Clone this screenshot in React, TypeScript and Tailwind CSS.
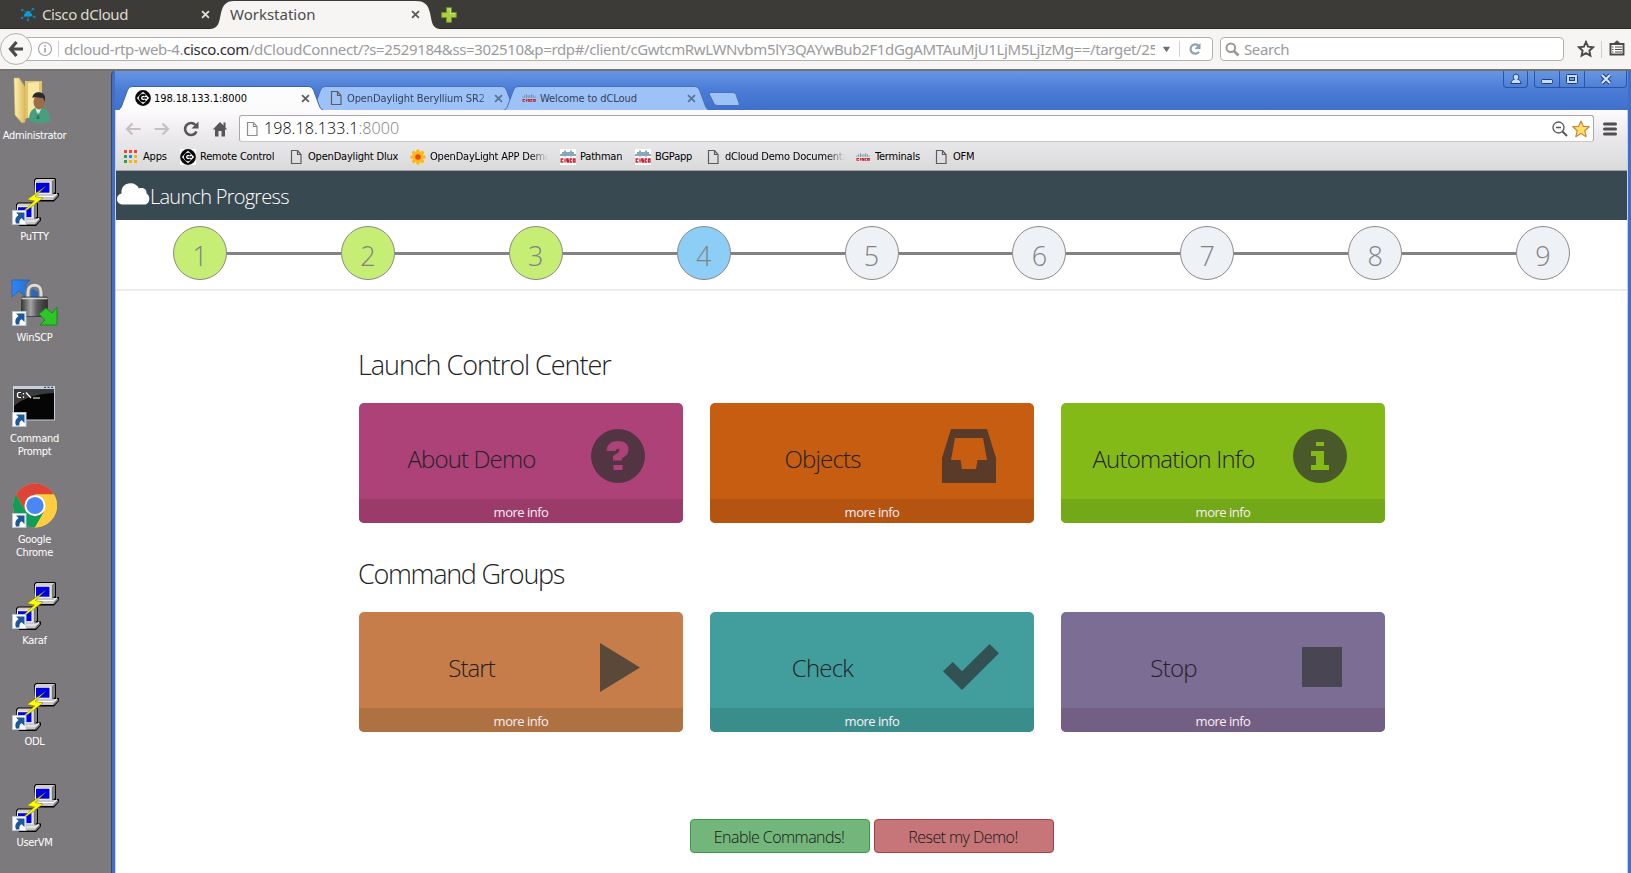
import React from "react";

const tahoma = "font-['DejaVu_Sans_Condensed','DejaVu_Sans',sans-serif]";
const ubuntu = "font-['Noto_Sans',sans-serif]";

/* ---------- Desktop icons ---------- */

function ShortcutBadge() {
  return (
    <g>
      <rect x="1.5" y="32.5" width="13.5" height="14" fill="#fdfdfd" stroke="#b9c4cf" strokeWidth="1" />
      <path d="M5 34.500h8.500v8.500l-2.800-2.800c-2 1-2.500 2.600-2.300 5.300H5c-1.500-3.500-.6-6.200 2.600-8.400z" fill="#1c5799" />
    </g>
  );
}

function Computer() {
  return (
    <g strokeLinejoin="round">
      <path d="M23 2l2-2h19l1 1v14h3v3l-5 5.500H27l-2-1-3-1v-4l2-2z" fill="#000" />
      <path d="M24 16h18.500L47 16l-4.500 6H26l-3-2v-2z" fill="#c6c6c6" />
      <path d="M24 18.500h18.500L46 15.500" fill="none" stroke="#fff" strokeWidth="1" />
      <path d="M42.500 21.500L47 17" stroke="#7c7c7c" strokeWidth="1.500" />
      <path d="M24 2.500L25.500 1H44l-2.500 2V16.500H24z" fill="#d4d0c8" />
      <path d="M41.500 3L44 1v13l-2.500 2.500z" fill="#808080" />
      <rect x="24.300" y="4" width="15.200" height="11.500" fill="#fff" />
      <rect x="25" y="4.700" width="13.500" height="10" fill="#0000e4" />
    </g>
  );
}

function PuttyIcon() {
  return (
    <svg viewBox="0 0 48 48" className="h-12 w-12">
      <Computer />
      <g transform="translate(-18 24.500)"><Computer /></g>
      <path d="M34.500 8.500L16 21.500l7.500 1.500L13 32.500l3-.500L32 20l-8-1.500z" fill="#ff0" stroke="#6b6b00" strokeWidth=".5" />
      <ShortcutBadge />
    </svg>
  );
}

function AdminIcon() {
  return (
    <svg viewBox="0 0 48 48" className="h-12 w-12">
      <defs>
        <linearGradient id="fold" x1="0" x2="1">
          <stop offset="0" stopColor="#fdf3b5" /><stop offset="1" stopColor="#dcb85c" />
        </linearGradient>
      </defs>
      <path d="M14 4l17 0v32l-17 6z" fill="#e3c46e" />
      <path d="M17 6l11-1v31l-11 5z" fill="#f7e7a4" />
      <path d="M3 1l5 0 6 9v35l-3 1L4 38z" fill="url(#fold)" stroke="#d5b65f" strokeWidth=".6" />
      <path d="M18 43c0-9 4-12 9-13 7 0 12 3 12 14-6 3-16 3-21-1z" fill="#479f7d" />
      <path d="M24 30l3 9 4-9z" fill="#d9efe6" />
      <path d="M27 35l-2 7h4z" fill="#2c7d60" />
      <ellipse cx="28" cy="25" rx="5.500" ry="7.500" fill="#9c6d47" />
      <path d="M21.500 21c0-8 12-7 12.500-1v5l-2-4c-4 0-7-1-8-1z" fill="#2c2b2b" />
    </svg>
  );
}

function WinScpIcon() {
  return (
    <svg viewBox="0 0 48 48" className="h-12 w-12">
      <defs>
        <linearGradient id="lockBody" x1="0" x2="1">
          <stop offset="0" stopColor="#3a3a3a" /><stop offset=".35" stopColor="#a5a5a5" />
          <stop offset=".6" stopColor="#5a5a5a" /><stop offset="1" stopColor="#2e2e2e" />
        </linearGradient>
        <linearGradient id="upArrow" x1="0" x2="1">
          <stop offset="0" stopColor="#2f86f5" /><stop offset="1" stopColor="#2a5ea8" />
        </linearGradient>
      </defs>
      <path d="M1 1h18l-5 5 16 9-9 9-13-12-7 6z" fill="url(#upArrow)" stroke="#1c62c8" strokeWidth=".8" />
      <path d="M17 20v-7c0-9 13-9 13 0v7" fill="none" stroke="#777" strokeWidth="6" />
      <path d="M17 20v-7c0-9 13-9 13 0v7" fill="none" stroke="#dcdcdc" strokeWidth="3" />
      <rect x="10.500" y="18" width="26" height="19.500" rx="1" fill="url(#lockBody)" stroke="#333" strokeWidth=".8" />
      <path d="M10.500 19.500h26" stroke="#cfcfcf" strokeWidth="1.500" />
      <path d="M46 28v18H29l5-5-6-6 7-6 6 5z" fill="#2fc52a" stroke="#128c17" strokeWidth="1" />
      <ShortcutBadge />
    </svg>
  );
}

function CmdIcon() {
  return (
    <svg viewBox="0 0 48 48" className="h-12 w-12">
      <rect x="2" y="6" width="42" height="34.500" fill="#c4d0dc" />
      <rect x="3" y="9" width="40" height="30.500" fill="#050505" />
      <path d="M3 9h40v4C25 14 12 18 3 26z" fill="#3b3b3b" />
      <path d="M33 7.300h2m1.500 0h2m1.500 0h2" stroke="#31508a" strokeWidth="1.200" />
      <path d="M10 12.500H7.500l-1 1v3l1 1H10M12.500 13v1.500m0 2v1.500M15 12.500l5 5.500M22 18h7" fill="none" stroke="#fff" strokeWidth="1.200" />
      <ShortcutBadge />
    </svg>
  );
}

function ChromeIcon() {
  return (
    <svg viewBox="0 0 48 48" className="h-12 w-12">
      <g transform="translate(0 -2.500)">
        <circle cx="24" cy="27" r="22" fill="#ffcd40" />
        <path d="M4.950 16A22 22 0 0 1 43.050 16L24 16 14.500 32.500z" fill="#db4437" />
        <path d="M4.950 16A22 22 0 0 0 24 49L33.500 32.500 24 38 14.500 32.500z" fill="#0f9d58" />
        <path d="M24 16h19.050A22 22 0 0 1 24 49l9.500-16.500z" fill="#ffcd40" />
        <circle cx="24" cy="27" r="10.500" fill="#fff" />
        <circle cx="24" cy="27" r="8.600" fill="#4a86f5" />
      </g>
      <ShortcutBadge />
    </svg>
  );
}

const shortcuts = [
  { icon: <AdminIcon />, lines: ["Administrator"] },
  { icon: <PuttyIcon />, lines: ["PuTTY"] },
  { icon: <WinScpIcon />, lines: ["WinSCP"] },
  { icon: <CmdIcon />, lines: ["Command", "Prompt"] },
  { icon: <ChromeIcon />, lines: ["Google", "Chrome"] },
  { icon: <PuttyIcon />, lines: ["Karaf"] },
  { icon: <PuttyIcon />, lines: ["ODL"] },
  { icon: <PuttyIcon />, lines: ["UserVM"] },
];

function Desktop() {
  return (
    <aside className="flex w-[111px] shrink-0 flex-col bg-[#7d7a7d] pt-[6px]">
      {shortcuts.map((s, i) => (
        <div key={i} className="flex h-[101px] w-[69px] shrink-0 flex-col items-center">
          {s.icon}
          <div className={`${tahoma} mt-[4px] text-center text-[11px] leading-[13px] tracking-[-0.3px] text-white`}>
            {s.lines.map((l) => <div key={l}>{l}</div>)}
          </div>
        </div>
      ))}
    </aside>
  );
}

/* ---------- Small shared icons ---------- */

function PageIcon({ pale = false }: { pale?: boolean }) {
  return (
    <svg viewBox="0 0 16 16" className="h-4 w-4 shrink-0">
      <path d="M3.500 1.500h6l3.500 4v9H3.500z" fill={pale ? "#fafafa" : "none"} stroke={pale ? "#8e8e8e" : "#5c5c5c"} strokeWidth="1.200" />
      <path d="M9.500 1.500v4H13" fill="none" stroke={pale ? "#8e8e8e" : "#5c5c5c"} strokeWidth="1.200" />
    </svg>
  );
}

function RemoteIcon() {
  return (
    <svg viewBox="0 0 16 16" className="h-4 w-4 shrink-0">
      <rect width="16" height="16" fill="#fff" />
      <circle cx="8" cy="8" r="7.900" fill="#0a0a0a" />
      <path d="M8 1.800L14.200 8 8 14.200 1.800 8z" fill="#fff" />
      <path d="M10.300 5.800A3.100 3.100 0 1 0 10.300 10.200" fill="none" stroke="#0a0a0a" strokeWidth="2" />
      <path d="M7.500 8h4.500" stroke="#0a0a0a" strokeWidth="1.600" />
    </svg>
  );
}

function CiscoIcon({ small = false }: { small?: boolean }) {
  return (
    <svg viewBox="0 0 16 16" className="h-4 w-4 shrink-0">
      {!small && <rect width="16" height="16" fill="#fff" />}
      <g transform={small ? "translate(1 3.500) scale(.88 .6)" : undefined}>
        <path d="M1 5v2M3 3v4M5 1.500v6M7 3v4M9 3v4M11 1.500v6M13 3v4M15 5v2" stroke={small ? "#5c8494" : "#27627c"} strokeWidth="1.100" />
        <path d="M3.400 10H1.200v3h2.200M5 9.500v4M8.700 10H6.800v1.500h1.700V13H6.600M12 10h-1.800v3H12M13.300 10h1.700v3h-1.700z" fill="none" stroke="#c4202f" strokeWidth="1.300" />
      </g>
    </svg>
  );
}

function AppsIcon() {
  const colors = ["#f4442e", "#f4442e", "#f4442e", "#2f9e50", "#2f86f0", "#f9b50b", "#2f9e50", "#f9b50b", "#f9b50b"];
  return (
    <svg viewBox="0 0 16 16" className="h-4 w-4 shrink-0">
      {colors.map((c, i) => <rect key={i} x={1 + (i % 3) * 5} y={1 + Math.floor(i / 3) * 5} width="3" height="3" fill={c} />)}
    </svg>
  );
}

function SunIcon() {
  return (
    <svg viewBox="0 0 16 16" className="h-4 w-4 shrink-0">
      <g stroke="#fdb813" strokeWidth="3.600" strokeLinecap="round">
        <path d="M8 2v12M2 8h12M3.700 3.700l8.600 8.600M12.300 3.700l-8.600 8.600" />
      </g>
      <circle cx="8" cy="8" r="2.800" fill="#ee4423" />
    </svg>
  );
}

function Cross({ className }: { className: string }) {
  return (
    <svg viewBox="0 0 10 10" className={className}>
      <path d="M1.200 1.200l7.600 7.600M8.800 1.200L1.200 8.800" stroke="currentColor" strokeWidth="2" />
    </svg>
  );
}

/* ---------- Outer browser ---------- */

function OuterTabs() {
  return (
    <div className={`${ubuntu} flex h-[29px] shrink-0 border-b border-[#2b2a27] bg-[#3c3b37] text-[15px] leading-[28px]`}>
      <div className="flex w-[213px] items-center pl-5">
        <svg viewBox="0 0 16 16" className="mr-1.5 h-4 w-4">
          <path d="M8 8L2.500 4M8 8l5-5M8 8l6.500 3M8 8l-6 4M8 8v6" stroke="#1b6f96" strokeWidth="1" />
          <path d="M4 9.500c0-2 1.300-2 1.600-2.500.6-2.600 4.400-2.600 5 0 2 .2 2 3.500 0 3.500H5C4.400 10.500 4 10 4 9.500z" fill="#0d9ad6" />
          <g fill="#1d80ab"><circle cx="2.200" cy="4" r="1.200" /><circle cx="13" cy="3" r="1.300" /><circle cx="14.500" cy="11" r="1.200" /><circle cx="2" cy="12" r="1.200" /><circle cx="8" cy="14" r="1.200" /></g>
        </svg>
        <span className="w-[159px] tracking-[-0.4px] text-[#dfdbd2]">Cisco dCloud</span>
        <Cross className="h-[9px] w-[9px] text-[#e6e2da]" />
      </div>
      <div className="relative flex w-[228px] items-center">
        <svg viewBox="0 0 240 29" className="absolute -left-[3px] top-0 h-[29px] w-[240px]">
          <path d="M0 29C9 28.500 9 22 11 13S17 1 24 1H206c8 0 12 3 14 12s2 15.500 10 16z" fill="#f6f5f3" />
        </svg>
        <span className="relative ml-[17px] w-[181px] text-[#4c4c4c]">Workstation</span>
        <Cross className="relative h-[9px] w-[9px] text-[#5a5956]" />
      </div>
      <svg viewBox="0 0 16 16" className="relative mt-[7px] h-4 w-4">
        <path d="M5.500.7h5v4.800h4.800v5h-4.800v4.800h-5v-4.800H.7v-5h4.800z" fill="#a9cf46" stroke="#71951c" strokeWidth="1" />
        <path d="M6.500 2h3v4.500H14" fill="none" stroke="#cbe585" strokeWidth="1" />
      </svg>
    </div>
  );
}

function OuterToolbar() {
  return (
    <div className={`${ubuntu} flex h-[42px] shrink-0 items-start border-b-2 border-[#747270] bg-[#f6f5f3] pt-[4px] text-[15px]`}>
      <svg viewBox="0 0 32 32" className="relative z-10 h-8 w-8 shrink-0">
        <circle cx="16" cy="16" r="15.500" fill="#f8f7f6" stroke="#b5b2ae" />
        <path d="M16.500 9l-6 7 6 7M11 16h12" fill="none" stroke="#4b4a48" strokeWidth="3.200" />
      </svg>
      <div className="-ml-2 mt-[4px] flex h-[24px] w-[1189px] shrink-0 items-center rounded-sm border border-[#b3b0ac] bg-white">
        <svg viewBox="0 0 16 16" className="ml-3 h-4 w-4 shrink-0">
          <circle cx="8" cy="8" r="6.500" fill="none" stroke="#a2a2a2" strokeWidth="1.100" />
          <path d="M8 7v4.500M8 4.200v1.600" stroke="#a2a2a2" strokeWidth="1.700" />
        </svg>
        <div className="ml-[5px] h-4 w-px shrink-0 bg-[#d0d0d0]" />
        <div className="ml-[5px] w-[1091px] shrink-0 overflow-hidden whitespace-nowrap leading-[22px] tracking-[-0.355px] text-[#9b9b9b]">
          dcloud-rtp-web-4.<span className="text-[#2e2e2e]">cisco.com</span>/dCloudConnect/?s=2529184&amp;ss=302510&amp;p=rdp#/client/cGwtcmRwLWNvbm5lY3QAYwBub2F1dGgAMTAuMjU1LjM5LjIzMg==/target/25
        </div>
        <svg viewBox="0 0 10 8" className="ml-[7px] h-2 w-[9px] shrink-0"><path d="M1 1.500h8L5 7.500z" fill="#6f6f6f" /></svg>
        <div className="ml-[8px] h-4 w-px shrink-0 bg-[#d0d0d0]" />
        <svg viewBox="0 0 14 14" className="ml-[8px] h-3.5 w-3.5 shrink-0">
          <path d="M11 9.800A4.700 4.700 0 1 1 10.500 3.600" fill="none" stroke="#8fa0af" strokeWidth="2.200" />
          <path d="M12.500 1v6h-6z" fill="#8fa0af" />
        </svg>
      </div>
      <div className="ml-[7px] mt-[4px] flex h-[24px] w-[344px] shrink-0 items-center rounded-sm border border-[#b3b0ac] bg-white pl-1">
        <svg viewBox="0 0 15 15" className="h-[15px] w-[15px]">
          <circle cx="5.800" cy="5.800" r="4.300" fill="none" stroke="#979797" strokeWidth="2" />
          <path d="M9 9l4.500 4.500" stroke="#979797" strokeWidth="2.600" />
        </svg>
        <span className="ml-1 leading-[22px] tracking-[-0.4px] text-[#9b9b9b]">Search</span>
      </div>
      <svg viewBox="0 0 18 18" className="ml-[13px] mt-[7px] h-[18px] w-[18px] shrink-0">
        <path d="M9 2l2.100 4.700 5 .6-3.700 3.400 1 5L9 13.200l-4.400 2.500 1-5L1.900 7.300l5-.6z" fill="none" stroke="#4a4a4a" strokeWidth="1.900" />
      </svg>
      <div className="ml-[6px] mt-[8px] h-[17px] w-px bg-[#d0cecb]" />
      <svg viewBox="0 0 16 16" className="ml-[7px] mt-[7px] h-4 w-4 shrink-0">
        <path d="M1.500 4h13v10.500h-13z" fill="#fff" stroke="#4a4a4a" strokeWidth="1.900" />
        <path d="M5 3.500L8 .8l3 2.700z" fill="#4a4a4a" stroke="#4a4a4a" />
        <path d="M3 7h1.500M3 9.500h1.500M3 12h1.500M6 7h7M6 9.500h7M6 12h7" stroke="#4a4a4a" strokeWidth="1.200" />
      </svg>
    </div>
  );
}

/* ---------- Inner browser ---------- */

function InnerTab({ icon, title, active = false, fade = false }: { icon: React.ReactNode; title: string; active?: boolean; fade?: boolean }) {
  return (
    <div className={`relative -mr-[14px] flex h-6 w-[207px] items-center ${active ? "z-10" : ""}`}>
      <svg viewBox="0 0 207 24" className="absolute inset-0 h-6 w-[207px]">
        <path d="M0 24.500C3 23.500 4 22 5 19L10.500 4Q12 .5 15 .5H192q3 0 4.500 3.500L202 19c1 3 2 4.500 5 5.500" fill={active ? "#fdfcfd" : "#9dc2f7"} stroke={active ? "#3d62ab" : "#4a6fb8"} strokeWidth="1" />
      </svg>
      <div className="relative flex w-full items-center pl-[18px]">
        {icon}
        <span className={`ml-[3px] w-[147px] shrink-0 overflow-hidden whitespace-nowrap pt-px leading-4 tracking-[-0.1px] ${active ? "text-black" : "text-[#33415a]"} ${fade ? "[mask-image:linear-gradient(to_right,#000_132px,transparent_143px)]" : ""}`}>{title}</span>
        <Cross className={`mt-px h-[9px] w-[9px] ${active ? "text-[#5f5f5f]" : "text-[#5c7399]"}`} />
      </div>
    </div>
  );
}

function TitleStrip() {
  return (
    <div className="flex h-[39px] shrink-0 items-end justify-between bg-linear-to-b from-[#6596e3] via-[#4a7bd6] to-[#4070cd]">
      <div className="flex items-end pl-[2px]">
        <InnerTab active icon={<RemoteIcon />} title="198.18.133.1:8000" />
        <InnerTab fade icon={<PageIcon />} title="OpenDaylight Beryllium SR2 w" />
        <InnerTab icon={<CiscoIcon small />} title="Welcome to dCLoud" />
        <svg viewBox="0 0 32 16" className="mb-[3px] ml-[12px] h-4 w-8">
          <path d="M2 1.500h23q2 0 3 2l3 8.500q1 2.500-1 2.500H9q-2 0-3-2L1.500 3.500q-.7-2 .5-2z" fill="#9dc2f7" stroke="#4a6fb8" />
        </svg>
      </div>
      <div className="flex gap-[6px] self-start pr-px">
        <div className="flex h-[17px] w-[25px] items-center justify-center rounded-b border border-t-0 border-[#2d54a0]">
          <svg viewBox="0 0 12 12" className="h-3 w-3">
            <path d="M1 10.500c0-3 2-4 3.500-4.200a2.800 2.800 0 1 1 3 0C9 6.500 11 7.500 11 10.500z" fill="#c9dcfa" stroke="#1f3d78" />
          </svg>
        </div>
        <div className="flex h-[17px] w-[93px] rounded-b border border-t-0 border-[#2d54a0]">
          <div className="flex w-[25px] items-center justify-center border-r border-[#2d54a0]">
            <svg viewBox="0 0 12 12" className="h-3 w-3"><rect x=".5" y="6.500" width="11" height="4" rx="1" fill="#c9dcfa" stroke="#1f3d78" /></svg>
          </div>
          <div className="flex w-[25px] items-center justify-center border-r border-[#2d54a0]">
            <svg viewBox="0 0 12 12" className="h-3 w-3">
              <rect x=".5" y="1.500" width="11" height="9" rx="1" fill="#c9dcfa" stroke="#1f3d78" />
              <rect x="3.500" y="4.500" width="5" height="3" fill="#6f9be6" stroke="#1f3d78" />
            </svg>
          </div>
          <div className="flex flex-1 items-center justify-center">
            <svg viewBox="0 0 12 12" className="h-3 w-3">
              <path d="M2 2l8 8M10 2l-8 8" stroke="#1f3d78" strokeWidth="4.200" />
              <path d="M2 2l8 8M10 2l-8 8" stroke="#d5e4fc" strokeWidth="2.200" />
            </svg>
          </div>
        </div>
      </div>
    </div>
  );
}

const bookmarks = [
  { icon: <AppsIcon />, label: "Apps", width: "w-[57px]", text: "" },
  { icon: <RemoteIcon />, label: "Remote Control", width: "w-[108px]", text: "" },
  { icon: <PageIcon />, label: "OpenDaylight Dlux", width: "w-[122px]", text: "" },
  { icon: <SunIcon />, label: "OpenDayLight APP Demo", width: "w-[150px]", text: "w-[120px] [mask-image:linear-gradient(to_right,#000_100px,transparent_118px)]" },
  { icon: <CiscoIcon />, label: "Pathman", width: "w-[75px]", text: "" },
  { icon: <CiscoIcon />, label: "BGPapp", width: "w-[70px]", text: "" },
  { icon: <PageIcon />, label: "dCloud Demo Documenta", width: "w-[150px]", text: "w-[122px] [mask-image:linear-gradient(to_right,#000_102px,transparent_120px)]" },
  { icon: <CiscoIcon small />, label: "Terminals", width: "w-[78px]", text: "" },
  { icon: <PageIcon />, label: "OFM", width: "w-[50px]", text: "" },
];

function InnerToolbar() {
  return (
    <div className="flex h-[61px] shrink-0 flex-col border-b border-[#a19fa1] bg-linear-to-b from-[#fdfbfd] via-[#e9e7ea] to-[#dadada]">
      <div className="flex h-[33px] items-center pl-[9px] pt-[4px]">
        <svg viewBox="0 0 16 16" className="h-4 w-4"><path d="M7.500 2.500L2 8l5.500 5.500M2 8h13.500" fill="none" stroke="#c3c1c3" strokeWidth="2.200" /></svg>
        <svg viewBox="0 0 16 16" className="ml-[13px] h-4 w-4"><path d="M8.500 2.500L14 8l-5.500 5.500M14 8H.5" fill="none" stroke="#c3c1c3" strokeWidth="2.200" /></svg>
        <svg viewBox="0 0 16 16" className="ml-[13px] h-4 w-4">
          <path d="M13.500 10.500A6 6 0 1 1 12.500 4" fill="none" stroke="#565656" strokeWidth="2.600" />
          <path d="M15.500.5v7h-7z" fill="#565656" />
        </svg>
        <svg viewBox="0 0 16 16" className="ml-[13px] h-4 w-4">
          <path d="M8 1L.8 8.500H3V15.500h3.500V10h3v5.500H13V8.500h2.200L13.500 6.500V1.500h-2v3z" fill="#565656" />
        </svg>
        <div className="ml-[11px] flex h-[27px] w-[1355px] items-center rounded-[3px] border border-[#a9a7a9] border-b-[#c9c7c9] bg-white pl-1">
          <PageIcon pale />
          <span className="ml-[4px] flex-1 font-['Open_Sans',sans-serif] text-[16px] font-light leading-[25px] tracking-[0.07px] text-black">
            198.18.133.1<span className="text-[#7a7a7a]">:8000</span>
          </span>
          <svg viewBox="0 0 16 16" className="h-4 w-4">
            <circle cx="6.500" cy="6.500" r="5.500" fill="none" stroke="#555" strokeWidth="1.300" />
            <path d="M4 6.500h5" stroke="#555" strokeWidth="1.500" /><path d="M10.500 10.500l4.500 4.500" stroke="#555" strokeWidth="2" />
          </svg>
          <svg viewBox="0 0 18 18" className="ml-[4px] mr-[3px] h-[18px] w-[18px]">
            <path d="M9 1l2.300 5.300 5.900.4-4.400 4 1.400 6L9 13.500l-5.200 3.200 1.400-6-4.400-4 5.900-.4z" fill="#ffdf6b" stroke="#c98a3a" strokeWidth="1.200" strokeLinejoin="round" />
          </svg>
        </div>
        <svg viewBox="0 0 14 14" className="ml-[9px] h-3.5 w-3.5"><path d="M1.500 2h11M1.500 7h11M1.500 12h11" stroke="#4f4f4f" strokeWidth="3" strokeLinecap="round" /></svg>
      </div>
      <div className="flex h-[27px] items-center pl-[7px]">
        {bookmarks.map((b) => (
          <div key={b.label} className={`flex shrink-0 items-center ${b.width}`}>
            {b.icon}
            <span className={`ml-[4px] overflow-hidden whitespace-nowrap pt-px leading-4 tracking-[-0.2px] text-black ${b.text}`}>{b.label}</span>
          </div>
        ))}
      </div>
    </div>
  );
}

/* ---------- Page ---------- */

const steps = [1, 2, 3, 4, 5, 6, 7, 8, 9];

function stepColor(n: number) {
  if (n < 4) return "bg-[#c6ee74]";
  if (n === 4) return "bg-[#8ccef6]";
  return "bg-[#eef1f6]";
}

function Progress() {
  return (
    <div className="flex h-[71px] shrink-0 items-start border-b-2 border-[#efebed] pl-[57px] pt-[6px]">
      {steps.map((n) => (
        <React.Fragment key={n}>
          {n > 1 && <div className="mt-[26px] h-[3px] w-[113.880px] shrink-0 bg-[#848284]" />}
          <div className={`flex h-[54px] w-[54px] shrink-0 items-center justify-center rounded-full border border-[#8a888a] pt-[4px] text-[27px] font-light leading-none text-[#848284] ${stepColor(n)}`}>{n}</div>
        </React.Fragment>
      ))}
    </div>
  );
}

const glyphs = {
  question: (
    <path fillRule="evenodd" d="M27 0a27 27 0 1 0 0 54a27 27 0 0 0 0-54zM15.700 22C15.700 15 20.500 12 27 12s10.500 3 10.500 8.500c0 4.500-3 7-6.500 8.500v2.500h-9v-4c1.500-2.500 6.500-3.500 6.500-6.500 0-1.700-3.500-1.700-4 1z M22.500 36h9v5h-9z" />
  ),
  inbox: <path fillRule="evenodd" d="M9 0h36l9 29v25H0V29zM13 9L9 31h9.500l1.500 9h14l1.500-9H45L41 9z" />,
  info: <path fillRule="evenodd" d="M27 0a27 27 0 1 0 0 54a27 27 0 0 0 0-54zM23 13h8v4h-8zM18 22h13v14h5v5H18v-5h5v-9h-5z" />,
  play: <path d="M9 5l40 24.500L9 54z" />,
  check: <path d="M1 33.300L10.800 24l9.200 9.300L47.600 6l9.400 9.300L20 52z" />,
  stop: <path d="M9 9h40v40H9z" />,
};

type Card = { title: string; glyph: keyof typeof glyphs; bg: string; foot: string; ink: string; spacing: string };

const sections: { heading: string; headingClass: string; cards: Card[] }[] = [
  {
    heading: "Launch Control Center",
    headingClass: "mt-[54px] tracking-[-1.05px]",
    cards: [
      { title: "About Demo", glyph: "question", bg: "bg-[#ad4279]", foot: "bg-[#9a3b69]", ink: "fill-[#523442]", spacing: "tracking-[-0.86px]" },
      { title: "Objects", glyph: "inbox", bg: "bg-[#c65d10]", foot: "bg-[#b55310]", ink: "fill-[#5a3a29]", spacing: "tracking-[-0.8px]" },
      { title: "Automation Info", glyph: "info", bg: "bg-[#84ba18]", foot: "bg-[#73a818]", ink: "fill-[#4a5929]", spacing: "tracking-[-0.8px]" },
    ],
  },
  {
    heading: "Command Groups",
    headingClass: "mt-[31px] tracking-[-1.28px]",
    cards: [
      { title: "Start", glyph: "play", bg: "bg-[#c67d4a]", foot: "bg-[#ad7142]", ink: "fill-[#5a4939]", spacing: "tracking-[-0.95px]" },
      { title: "Check", glyph: "check", bg: "bg-[#429e9c]", foot: "bg-[#398e8c]", ink: "fill-[#315152]", spacing: "tracking-[-0.8px]" },
      { title: "Stop", glyph: "stop", bg: "bg-[#7b6d94]", foot: "bg-[#735f84]", ink: "fill-[#4a4552]", spacing: "tracking-[-0.8px]" },
    ],
  },
];

function CommandCard({ card }: { card: Card }) {
  return (
    <div className={`h-[120px] w-[324px] overflow-hidden rounded-[5px] ${card.bg}`}>
      <div className="flex h-24">
        <div className={`w-[225px] pt-[39px] text-center text-[24px] font-light leading-[34px] text-[#222226] ${card.spacing}`}>{card.title}</div>
        <svg viewBox="0 0 58 58" className={`ml-[7px] mt-[26px] h-[58px] w-[58px] ${card.ink}`}>{glyphs[card.glyph]}</svg>
      </div>
      <div className={`h-6 pt-px text-center text-[13px] leading-6 tracking-[-0.5px] text-[#fbeef5] ${card.foot}`}>more info</div>
    </div>
  );
}

function Page() {
  return (
    <main className="flex flex-1 flex-col overflow-hidden bg-white font-['Open_Sans',sans-serif]">
      <header className="flex h-[49px] shrink-0 items-center bg-[#394951] pl-px">
        <svg viewBox="0 0 33 22" className="mb-[3px] h-[22px] w-[33px]">
          <path d="M6 21.500C2 21.500 0 19 0 16c0-3 1.500-4.800 4.500-5.500C4 4 8 .3 13.500.3c4 0 7 2 8.500 5.200 5-1.500 8 1.500 7.500 5 2 1 2.800 3 2.800 5 0 4-2.300 6-5.300 6z" fill="#fff" />
        </svg>
        <h1 className="mt-[3px] text-[20px] font-light tracking-[-0.75px] text-white">Launch Progress</h1>
      </header>
      <Progress />
      <div className="flex flex-col pl-[243px]">
        {sections.map((s) => (
          <section key={s.heading}>
            <h2 className={`-ml-px h-9 pt-[2px] text-[27px] font-light leading-9 text-[#222] ${s.headingClass}`}>{s.heading}</h2>
            <div className="mt-[22px] flex gap-[27px]">
              {s.cards.map((c) => <CommandCard key={c.title} card={c} />)}
            </div>
          </section>
        ))}
        <div className="ml-[331px] mt-[87px] flex gap-1 text-[16px] font-light tracking-[-0.55px] text-[#151515]">
          <button className="h-[34px] w-[180px] rounded border border-[#399a4a] bg-[#73b67b] pr-[2px] pt-px">Enable Commands!</button>
          <button className="h-[34px] w-[180px] rounded border border-[#ad3c42] bg-[#c67579] pr-[2px] pt-px">Reset my Demo!</button>
        </div>
      </div>
    </main>
  );
}

export default function App() {
  return (
    <div className="flex h-[873px] w-[1631px] flex-col overflow-hidden">
      <OuterTabs />
      <OuterToolbar />
      <div className="flex min-h-0 flex-1 bg-[#7d7a7d]">
        <Desktop />
        <div className={`${tahoma} flex min-w-0 flex-1 flex-col overflow-hidden rounded-tl border-l border-[#3a4763] bg-[#3f6fca] pl-[3px] pr-[3px] text-[11px]`}>
          <TitleStrip />
          <div className="flex min-h-0 flex-1 flex-col border-x border-[#c3d3ee]">
            <InnerToolbar />
            <Page />
          </div>
        </div>
      </div>
    </div>
  );
}
